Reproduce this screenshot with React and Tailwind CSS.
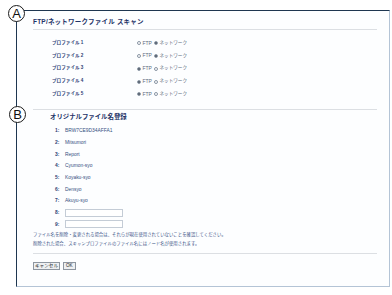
import React from "react";

const jp = { fontFamily: '"Liberation Sans", "Noto Sans CJK JP", sans-serif' };

function Radio({ on }) {
  return (
    <span className="inline-flex items-center justify-center w-[4px] h-[4px] rounded-full border-[0.5px] border-[#8a96a4] bg-white mr-[1.5px]">
      {on && <span className="w-[2px] h-[2px] rounded-full bg-[#3a4656]" />}
    </span>
  );
}

function Circle({ letter, className }) {
  return (
    <div
      className={"absolute w-[17px] h-[17px] rounded-full border border-[#1a1a1a] bg-white flex items-center justify-center text-[13px] leading-none text-[#111] " + className}
      style={jp}
    >
      {letter}
    </div>
  );
}

export default function App() {
  const profiles = [
    { n: 1, ftp: false },
    { n: 2, ftp: false },
    { n: 3, ftp: true },
    { n: 4, ftp: true },
    { n: 5, ftp: true },
  ];
  const items = ["BRW7CE9D34AFFA1", "Mitsumori", "Report", "Cyumon-syo", "Koyaku-syo", "Densyo", "Akuyu-syo"];
  return (
    <div className="w-[392px] h-[295px] bg-white relative pt-[10px] pl-[16px]" style={jp}>
      <div className="w-[374px] h-[277px] border-l border-t border-l-[#1e3650] border-t-[#1e3650] border-r border-b border-r-[#b4c4d6] border-b-[#b4c4d6] bg-[#fdfeff] pl-[16px] pr-[12px] flex flex-col">
        <div className="h-[19px] border-b border-[#dcdfe3] pt-[7px]">
          <div className="text-[6.5px] leading-[8px] font-bold text-[#1f3468] tracking-[0.2px]">FTP/ネットワークファイル スキャン</div>
        </div>
        <div className="h-[80px] border-b border-[#dcdfe3] pt-[7px]">
          {profiles.map((p) => (
            <div key={p.n} className="h-[12.75px] flex items-center">
              <div className="w-[104px] pl-[19px] text-[4.6px] font-bold text-[#2a3d73]">プロファイル {p.n}</div>
              <div className="flex items-center text-[4.6px] text-[#5d6b7c]">
                <Radio on={p.ftp} />
                <span className="mr-[2px] text-[5px]">FTP</span>
                <Radio on={!p.ftp} />
                <span>ネットワーク</span>
              </div>
            </div>
          ))}
        </div>
        <div className="h-[144px] border-b border-[#dcdfe3] pt-[3px]">
          <div className="pl-[17px] text-[6.4px] leading-[8px] font-bold text-[#1f3468]">オリジナルファイル名登録</div>
          <div className="mt-[4px]">
            {items.map((t, i) => (
              <div key={i} className="h-[11.7px] flex items-center text-[4.9px] text-[#34507f]">
                <span className="w-[32px] pl-[22px] font-bold text-[#2a3d73]">{i + 1}:</span>
                <span>{t}</span>
              </div>
            ))}
            {[8, 9].map((n) => (
              <div key={n} className="h-[11.7px] flex items-center text-[4.9px]">
                <span className="w-[32px] pl-[22px] font-bold text-[#2a3d73]">{n}:</span>
                <span className="w-[58px] h-[8px] border border-[#c4ccd6] bg-white" />
              </div>
            ))}
          </div>
          <div className="text-[4.4px] leading-[9px] text-[#3d5689]">
            <div>ファイル名を削除・変更される場合は、それらが現在使用されていないことを確認してください。</div>
            <div>削除された場合、スキャンプロファイルのファイル名にはノード名が使用されます。</div>
          </div>
        </div>
        <div className="mt-[8px] flex gap-[3px]">
          <button className="h-[8px] px-[1px] border border-[#8e96a0] bg-[#eef0f2] text-[4.6px] leading-none text-[#222]" style={jp}>キャンセル</button>
          <button className="h-[8px] px-[2px] border border-[#8e96a0] bg-[#eef0f2] text-[4.6px] leading-none text-[#222]" style={jp}>OK</button>
        </div>
      </div>
      <Circle letter="A" className="left-[8px] top-[5px]" />
      <Circle letter="B" className="left-[9px] top-[106px]" />
    </div>
  );
}
